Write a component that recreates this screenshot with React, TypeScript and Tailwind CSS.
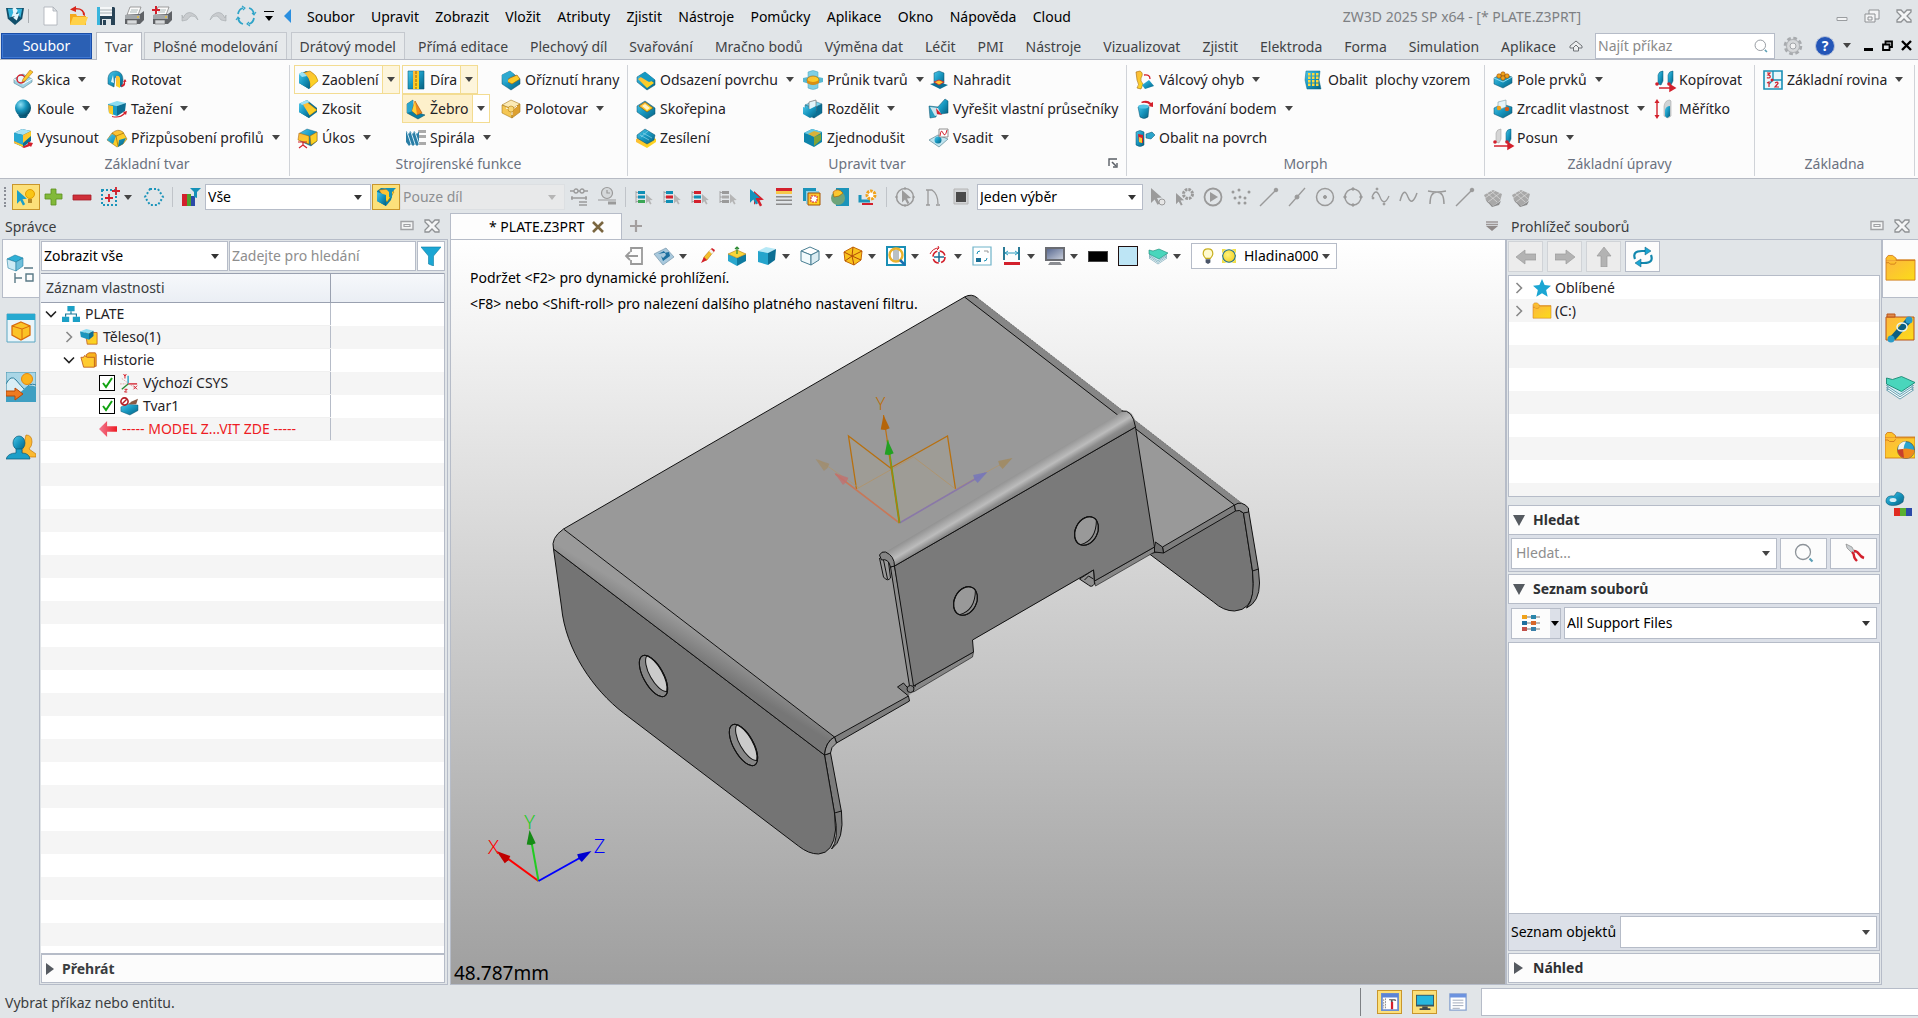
import React, { useState } from "react";
import type { ReactNode } from "react";

/* ---------- icon helpers ---------- */

const Caret = ({ cls = "text-[#444]" }: { cls?: string }) => (
  <svg viewBox="0 0 8 5" className={"h-[5px] w-2 shrink-0 " + cls} aria-hidden="true">
    <path d="M0 0h8L4 5z" fill="currentColor" />
  </svg>
);

const Cube = ({ t = "#7fd6ee", l = "url(#teal)", r = "#0b6f94", x = 0, y = 0, s = 1 }) => (
  <g transform={`translate(${x} ${y}) scale(${s})`} strokeLinejoin="round" strokeWidth=".4" stroke="#0a4f6b">
    <path d="M11 2l8 3-8 4-9-3z" fill={t} />
    <path d="M2 6l9 3v10l-9-4z" fill={l} />
    <path d="M19 5l-8 4v10l8-5z" fill={r} />
  </g>
);

const Folder = () => (
  <g stroke="#d07a1e" strokeWidth=".6" strokeLinejoin="round">
    <path d="M0 4h20v14H0z" fill="url(#gold)" />
    <path d="M0 4V3l1.500-2h3L7 3v1.500h13M0 6h2l1 1h3l1-1.500" fill="#fdc22a" />
  </g>
);

const Tower = ({ x = 0, g = false }) => (
  <path d={`M${x} 14V5q1-4 5-4v10l-2 4z`} fill={g ? "#d5d5d5" : "url(#teal)"} stroke={g ? "#999" : "#0a5a78"} strokeWidth=".5" />
);

const Cursor = ({ c = "#9b9b9b", x = 0, y = 0, s = 1 }) => (
  <path transform={`translate(${x} ${y}) scale(${s})`} d="M0 0l9 8-4 .4 2.400 4.600-2 1L3 9.500 0 12.500z" fill={c} />
);

const G = "#9a9a9a";
const red = "#d3202c";

const ListRows = ({ a, b, c = "#0f8fb5" }: { a: string; b: string; c?: string }) => (
  <g>
    <path d="M4 4h7v3H4z" fill={a} />
    <path d="M4 8.500h7v3H4z" fill={b} />
    <path d="M4 13h7v3H4z" fill={c} />
    <path d="M2 4v12M2 5.500h2M2 10h2M2 14.500h2" stroke="#999" strokeWidth=".8" fill="none" />
    <Cursor x={12} y={7} s={0.75} c="#b5b5b5" />
  </g>
);

const icons: Record<string, ReactNode> = {
  sketch: (
    <g>
      <path d="M1 9l9-5 9 5v3l-9 6-9-5z" fill="#9fd2e2" stroke="#5a8796" strokeWidth=".6" />
      <path d="M1 9l9 5 9-5" fill="none" stroke="#fff" />
      <circle cx="8" cy="9" r="4" fill="#e8f6fb" stroke={red} strokeWidth="1.500" />
      <path d="M17 0l3 2-8 9-3 1 1-3z" fill="url(#gold)" stroke="#a65a00" strokeWidth=".5" />
    </g>
  ),
  sphere: (
    <g>
      <path d="M5 16q5-2 10 0l-2 3H7z" fill="#0b5f80" />
      <ellipse cx="10" cy="9" rx="8" ry="8.500" fill="url(#ball)" />
    </g>
  ),
  extrude: (
    <g>
      <path d="M1 5l8-4 9 2v10l-8 6-9-4z" fill="#0b6f94" />
      <path d="M1 5l8-4 9 2-8 4z" fill="#a6e2f3" />
      <path d="M1 5l9 2v10l-9-4z" fill="#28a9d2" />
      <path d="M1 13l9 4v2l-9-4z" fill="url(#gold)" />
      <path d="M10 7l8-4v5l-8 7z" fill="url(#gold)" />
      <path d="M9 19l6-3v-2l5 1-2 4-1-1-6 2z" fill={red} />
    </g>
  ),
  revolve: (
    <g>
      <path d="M1 14V8q1-7 8-7 7 1 7 9l-1 7-5-2V8L8 7 7 17z" fill="url(#teal)" stroke="#0a4f6b" strokeWidth=".5" />
      <path d="M9 6q3-1 4 2v10l-4-2z" fill="url(#gold)" />
      <path d="M15 17q4-1 3-5l1.500-.5L18 9l-2 3 1 .2q0 2-3 3.300z" fill={red} />
      <path d="M4 12l2-7 1 8z" fill="#e4f5fb" />
    </g>
  ),
  sweep: (
    <g>
      <path d="M1 5l9-3 9 2-9 3z" fill="#8adcf1" />
      <path d="M1 5l9 2v10l-8-3z" fill="#1b9cc5" />
      <path d="M10 7l9-3-1 8-8 5z" fill="#0b6f94" />
      <path d="M1 6l5 1v9l-4-2z" fill="url(#gold)" />
      <path d="M5 17q7 2 12-3l-1-1 4-1-1 4-1-1q-5 5-13 3z" fill={red} />
    </g>
  ),
  loft: (
    <g>
      <path d="M0 12l5-7q6-5 11-1l4 7-4 5-6 3z" fill="url(#gold)" stroke="#8a5a00" strokeWidth=".5" />
      <path d="M0 12l5-6 4 2-3 8zM12 12l7-2-3 6-5 3z" fill="url(#teal)" />
      <path d="M5 5l4 3 8-3M9 8l2 10" stroke="#8a5a00" strokeWidth=".6" fill="none" />
    </g>
  ),
  fillet: (
    <g>
      <path d="M1 5l7-4q9 1 11 9l-8 9-10-6z" fill="#0b6f94" />
      <path d="M5 3l7-2q7 4 8 10l-8 7Q13 9 5 3z" fill="url(#gold)" stroke="#a86a00" strokeWidth=".5" />
      <path d="M1 4l3-2q9 5 8 15l-1 2-10-6z" fill="url(#teal)" />
      <path d="M1 4l3-2q3 1 5 4L4 7z" fill="#9be1f4" />
    </g>
  ),
  chamfer: (
    <g>
      <path d="M1 5l8-4 10 8v4l-8 6-10-6z" fill="#0b6f94" />
      <path d="M9 3l10 8-8 6L3 6z" fill="url(#gold)" stroke="#a86a00" strokeWidth=".5" />
      <path d="M1 5l3-1 8 13-1 2-10-6z" fill="url(#teal)" />
      <path d="M2 4l7-3 3 2-8 3z" fill="#9be1f4" />
    </g>
  ),
  draft: (
    <g>
      <path d="M2 5l7-4 10 3v9l-6 5-11-5z" fill="url(#teal)" stroke="#0a4f6b" strokeWidth=".4" />
      <path d="M1 5l10 3v8L0 12zM12 8l7-4v9l-6 4z" fill="url(#gold)" stroke="#a05a00" strokeWidth=".5" />
      <path d="M5 14v3l-4 3M5 17l4 3M0 14h9" stroke={red} fill="none" strokeWidth="1.200" />
    </g>
  ),
  hole: (
    <g>
      <path d="M2 1h16v18H2z" fill="url(#teal)" stroke="#0a5a78" strokeWidth=".6" />
      <path d="M7 1h6v18H7z" fill="url(#gold)" />
      <path d="M10 1v18" stroke="#9c6200" strokeDasharray="3 1" />
    </g>
  ),
  rib: (
    <g>
      <path d="M1 5l6-4v11l12 4-7 4-11-6z" fill="#0b7ea5" stroke="#08485f" strokeWidth=".5" />
      <path d="M1 5l6-4v11l-6 2z" fill="#2aa5cc" />
      <path d="M9 2l7 12-5 2-5-4z" fill="#f08a1c" stroke="#a84a00" strokeWidth=".6" />
      <path d="M9 2l2 14-5-4z" fill="#ffd23a" />
    </g>
  ),
  thread: (
    <g>
      <path d="M12 2h8v3h-7zM12 7h8v3h-7zM13 14h7v3h-7z" fill="#aaa" />
      <path d="M0 3l3 3 1-3 3 3 1-3 3 3 2-3v13l-2 2-2-2-2 2-2-2-2 2-3-4z" fill="#2a7ea6" />
      <path d="M1 4l4 12M5 4l4 12M9 4l4 12" stroke="#cfe9f4" />
    </g>
  ),
  trim: (
    <g>
      <path d="M1 5l8-4 10 8v5l-9 6-9-6z" fill="url(#teal)" stroke="#0a4f6b" strokeWidth=".5" />
      <path d="M9 8l7-3 3 4-8 5-6-3z" fill="url(#gold)" stroke="#a05a00" strokeWidth=".6" />
      <path d="M1 5l8-4 4 3-6 4v5l-5-2z" fill="#2ea9cf" />
    </g>
  ),
  stock: (
    <g>
      <g stroke="#a87a1c" strokeWidth=".6">
        <path d="M1 6l9-5 9 4-8 5z" fill="#fbeab5" />
        <path d="M1 6l10 4v9l-10-5z" fill="#f4c653" />
        <path d="M19 5l-8 5v9l8-6z" fill="#dda030" />
      </g>
      <path d="M5 9l6 2 5-4M11 11v5" stroke="#fff" fill="none" />
      <circle cx="10" cy="10" r="3" fill="#f8d777" stroke="#b07c14" strokeWidth=".6" />
    </g>
  ),
  offset: (
    <g>
      <path d="M1 7l8-5 10 8v5l-8 5L1 12z" fill="url(#teal)" stroke="#0a4f6b" strokeWidth=".5" />
      <path d="M2 9l6-4 10 8-7 5z" fill="url(#gold)" />
      <path d="M3 6l6-4 10 8-6 2z" fill="#1699c2" />
    </g>
  ),
  shell: (
    <g>
      <path d="M1 7l8-5 10 7v6l-8 5L1 13z" fill="url(#teal)" stroke="#0a4f6b" strokeWidth=".5" />
      <path d="M3 7l6-4 8 6-6 4z" fill="url(#gold)" stroke="#8c4b00" strokeWidth=".6" />
      <path d="M6 7l3-2 5 4-3 2z" fill="#fff3c8" />
    </g>
  ),
  thicken: (
    <g>
      <path d="M0 11l9-5 11 5v3l-9 6-11-6z" fill="url(#gold)" />
      <path d="M1 7l8-6 10 6-1 5-7 4-10-6z" fill="url(#teal)" stroke="#0a4f6b" strokeWidth=".5" />
      <path d="M4 7l9 5M7 5l9 5M12 3L5 9" stroke="#9adcf0" strokeWidth=".6" />
    </g>
  ),
  intersect: (
    <g>
      <path d="M5 2q5-3 10 0v16q-5 3-10 0z" fill="#7fcfe4" stroke="#4aa4bd" strokeWidth=".5" />
      <path d="M0 8l10-2 10 2v4l-10 3-10-3z" fill="#58b8d2" />
      <ellipse cx="10" cy="10" rx="6" ry="4" fill="url(#gold)" stroke="#9c6200" strokeWidth=".6" />
      <path d="M4 10q6 4 12 0v3q-6 4-12 0z" fill="#d98f14" />
    </g>
  ),
  split: (
    <g>
      <Cube />
      <path d="M6 3l7-2v11l-7 4z" fill="#e3f4f9" stroke="#777" strokeWidth=".7" />
      <path d="M0 8l7 2v9l-7-4zM7 10l6-3v9l-6 3z" fill="url(#teal)" />
    </g>
  ),
  simplify: (
    <g>
      <path d="M1 5l8-4 10 3v10l-8 5-10-5z" fill="#0e84aa" />
      <path d="M1 5l8-4 10 3-8 4z" fill="#67c9e4" />
      <path d="M11 9l7-3v6l-7 6z" fill="#83a436" />
      <path d="M5 6l6-3 7 2-7 4z" fill="#d9b23a" />
    </g>
  ),
  replace: (
    <g>
      <path d="M5 3l5-2 5 2v10l-5 3-5-3z" fill="url(#teal)" stroke="#0a4f6b" strokeWidth=".5" />
      <path d="M1 14l9-2 9 3-8 4z" fill="#0b6f94" />
      <path d="M5 12l5-2 5 2-5 3z" fill="url(#gold)" stroke={red} strokeWidth=".8" />
    </g>
  ),
  solve: (
    <g>
      <path d="M0 7l9 1-2 10-6 1z" fill="#2a9dc0" stroke="#0a4f6b" strokeWidth=".5" />
      <path d="M8 9l8-9 3 2v12l-7 1z" fill="url(#teal)" stroke="#0a4f6b" strokeWidth=".5" />
      <path d="M1 8l8 1 3 6-6 2z" fill="#cfe6ee" />
      <path d="M7 9l6 7-5-1z" fill={red} />
    </g>
  ),
  embed: (
    <g>
      <path d="M0 12l9-5 10 4-9 8z" fill="#bfe4ef" stroke="#5d8794" strokeWidth=".7" />
      <circle cx="9" cy="12" r="3.500" fill="url(#teal)" />
      <path d="M10 1h9v8h-9z" fill="#fff" stroke="#777" strokeWidth=".8" />
      <path d="M11 8q1-8 3-3t4-3" fill="none" stroke={red} />
    </g>
  ),
  cylbend: (
    <g>
      <path d="M1 2l4-1q4 2 1 7-1 3 2 6l-2 5-4-1q3-3 0-8z" fill="url(#gold)" stroke="#a66b00" strokeWidth=".6" />
      <path d="M7 15l7-5 5 6-9 3z" fill="url(#teal)" />
      <path d="M9 5q6-1 6 4" fill="none" stroke={red} strokeWidth="1.300" />
    </g>
  ),
  morph: (
    <g>
      <path d="M3 8q6-3 11 0l-1 10q-4 3-8 0z" fill="url(#teal)" stroke="#0a4f6b" strokeWidth=".5" />
      <ellipse cx="8.500" cy="7.500" rx="5.500" ry="2" fill="#57c4e4" />
      <path d="M6 3q6-3 10 1l2-1v5l-5-1 2-1q-3-3-8-2z" fill={red} />
    </g>
  ),
  wrap: (
    <g>
      <path d="M1 4q4-3 8 0v13q-4 3-8 0z" fill="url(#teal)" stroke="#0a4f6b" strokeWidth=".5" />
      <path d="M3 6l5 1v8l-4-1z" fill={red} />
      <path d="M4 9l3 1v5l-3-1z" fill="url(#gold)" />
      <path d="M11 6l6-2 3 3-4 4-5-1z" fill="#2aa4ca" stroke="#0a4f6b" strokeWidth=".5" />
    </g>
  ),
  wrappat: (
    <g>
      <path d="M2 1h14l-1 9 2 9H3L1 10z" fill="url(#teal)" stroke="#0a6b8c" strokeWidth=".5" />
      {[3, 6.500, 10, 13.500].map((y) => (
        <path key={y} d={`M4 ${y}h2.500v2.500H4zM8 ${y}h2.500v2.500H8zM12 ${y}h2.500v2.500H12z`} fill="#ffd83a" />
      ))}
    </g>
  ),
  pattern: (
    <g>
      <path d="M1 8l8-4 10 3v6l-9 5-9-4z" fill="url(#teal)" stroke="#0a4f6b" strokeWidth=".5" />
      <path d="M1 8l9 4 9-5" stroke="#8fd9ee" fill="none" />
      {[[6, 6], [10, 4], [10, 8], [14, 6]].map(([x, y]) => (
        <circle key={x + "-" + y} cx={x} cy={y} r="2.200" fill="#f0a21b" stroke="#9a4a00" strokeWidth=".6" />
      ))}
    </g>
  ),
  mirror: (
    <g>
      <path d="M1 9l8-4 10 3v6l-9 5-9-4z" fill="url(#teal)" stroke="#0a4f6b" strokeWidth=".5" />
      <path d="M5 3l8-2v7l-8 3z" fill="#e6f4f8" stroke="#7c9aa3" strokeWidth=".6" />
      <circle cx="6" cy="9" r="2.200" fill="#f0a21b" />
      <circle cx="14" cy="10" r="2.200" fill="#d05a1b" />
    </g>
  ),
  move: (
    <g>
      <Tower x={3} g />
      <Tower x={13} />
      <path d="M1 18h15M15 15l5 3-5 3z" stroke={red} strokeWidth="1.500" fill={red} />
      <circle cx="2" cy="14" r="1.800" fill={red} />
      <circle cx="14" cy="14" r="1.800" fill={red} />
    </g>
  ),
  copy: (
    <g>
      <Tower x={3} />
      <Tower x={13} />
      <path d="M4 18h12M15 15l5 3-5 3z" stroke={red} strokeWidth="1.500" fill={red} />
      <circle cx="2" cy="14" r="1.800" fill={red} />
      <circle cx="14" cy="14" r="1.800" fill={red} />
    </g>
  ),
  scale: (
    <g>
      <path d="M9 17V7q1-6 6-6l1 1v15l-3 2z" fill="#cfd4d6" stroke="#999" strokeWidth=".5" />
      <path d="M10 17v-6q1-4 5-4v10l-3 2z" fill="url(#teal)" />
      <path d="M2 3v14" stroke={red} strokeWidth="1.400" />
      <path d="M2 0l2.500 4h-5zM2 20l2.500-4h-5z" fill={red} />
    </g>
  ),
  datum: (
    <g>
      <path d="M1 1h18v18H1z" fill="#eaf7fb" stroke="#1a8fb5" strokeWidth="1.600" />
      <path d="M10 1v9h9M10 10L6 14" stroke="#1a8fb5" fill="none" strokeWidth="1.400" />
      <path d="M4 3h3L5 5q3 0 2 2.500-2 1-3 0M4 13l2-1v5M12 13q3-2 3 .5l-3 3.500h4" stroke={red} fill="none" strokeWidth="1.200" />
      <circle cx="9" cy="10" r="1.500" fill={red} />
    </g>
  ),
  newdoc: <path d="M4 1h9l4 4v14H4zM13 1v4h4" fill="#fff" stroke="#a8adb5" strokeWidth=".8" />,
  open: (
    <g>
      <path d="M2 8h6l1 2h9v9H2z" fill="#f5a91d" />
      <path d="M5 11h15l-3 8H2z" fill="#ffd24a" />
      <path d="M15 9q0-6-7-5.500V6L2 3.500 8 0v2q9 0 9 8z" fill="#d8261c" />
    </g>
  ),
  save: (
    <g>
      <path d="M1 1h17l1 1v17H1z" fill="#284356" />
      <path d="M4 1h12v9H4z" fill="#f5f7f8" />
      <path d="M4 4h12M4 7h12" stroke="#a8b0b5" />
      <path d="M1 1h3v18H1z" fill="#38b5dd" />
      <path d="M6 13h9v6H6z" fill="#dfe5e8" />
      <path d="M7 14h3v5H7z" fill="#284356" />
    </g>
  ),
  printer: (
    <g>
      <path d="M6 1h11l-3 8H3z" fill="#fafafa" stroke="#888" strokeWidth=".8" />
      <path d="M7 4h7M6 6h7" stroke="#9aa" strokeWidth=".8" />
      <path d="M1 9l15-1 4-3v9l-4 4H1z" fill="#5f6266" />
      <path d="M1 9h15v4H1z" fill="#a3a7aa" />
      <path d="M3 14h10v4H3z" fill="#d5d8da" stroke="#666" strokeWidth=".6" />
      <circle cx="14" cy="11" r="1" fill="#e4bf3a" />
    </g>
  ),
  plusred: <path d="M4 0v8M0 4h8" stroke="#d3202c" strokeWidth="2" />,
  undo: <path d="M3 12q3-7 9-5 5 2 6 7-3-5-7-4-2 1-4 4l-5 1V9z" fill="#c9cccf" stroke="#a5a9ac" strokeWidth=".6" />,
  redo: <path d="M17 12q-3-7-9-5-5 2-6 7 3-5 7-4 2 1 4 4l5 1V9z" fill="#c9cccf" stroke="#a5a9ac" strokeWidth=".6" />,
  cycle: (
    <g fill="none" stroke="#2fa4c8" strokeWidth="1.800">
      <path d="M2 8q1-5 5-6M13 2q4 1 5 6M18 12q-1 5-5 6M7 18q-4-1-5-6" />
      <path d="M6 0l3 2-2 2M20 6l-2 3-2-2M14 20l-3-2 2-2M0 14l2-3 2 2" strokeWidth="1.100" />
    </g>
  ),
  logo: (
    <g>
      <path d="M0 1h20l-2 12-8 7-8-7z" fill="#12506b" />
      <path d="M2 2h5l2 7-5 3zM11 2h7l-2 10-3-5z" fill="#35b6dd" />
      <path d="M7 2l3-2 3 4-2 4 4-1-3 8-4-3 2-2-4 1 2-5z" fill="#e6f7fd" />
    </g>
  ),
  lamp: (
    <g>
      <Cursor c="#1b9fc9" x={1} y={3} s={1.100} />
      <circle cx="14" cy="7" r="4.500" fill="#f9c515" stroke="#e39c00" />
      <path d="M12 12h4v4h-4z" fill="#b58b2a" />
    </g>
  ),
  plus: <path d="M7 2h5v5h6v5h-6v6H7v-6H1V7h6z" fill="#82b93a" stroke="#5c8f20" strokeWidth=".8" />,
  minus: <path d="M1 8h18v5H1z" fill="#cf2f3a" stroke="#a51c26" strokeWidth=".8" />,
  marquee: (
    <g fill="none">
      <path d="M2 3h14v15H2z" stroke="#1b94ba" strokeWidth="2" strokeDasharray="2 2" />
      <path d="M9 7v8M5 11h8M16 0v8M12 4h8" stroke={red} strokeWidth="1.800" />
    </g>
  ),
  lasso: <path d="M6 2h8l5 8-5 8H6l-5-8z" fill="none" stroke="#1b94ba" strokeWidth="2" strokeDasharray="2 2" />,
  filterbars: (
    <g>
      <path d="M1 7h5v12H1z" fill="#d3202c" />
      <path d="M6 7h4v12H6z" fill="#4aa32e" />
      <path d="M10 9h4v10h-4z" fill="#2c4aa8" />
      <path d="M9 1h11l-4 4v6l-3-1V5z" fill="#1591b8" />
    </g>
  ),
  partfilter: (
    <g>
      <path d="M1 4l4-3 13 1-3 11-5 6-9-5z" fill="#0b7ea5" />
      <path d="M3 3l10-1 5 3-7 10z" fill="url(#gold)" stroke="#a86a00" strokeWidth=".5" />
      <path d="M1 5l9 3v11l-9-5z" fill="url(#teal)" />
      <path d="M9 1h11l-4 4v6l-3-1V5z" fill="#1591b8" />
    </g>
  ),
  chainref: (
    <g stroke={G} fill="none" strokeWidth="1.300">
      <path d="M1 4h4M9 4h2M15 4h4M2 11h16M3 9v4M17 9v4" />
      <circle cx="7" cy="4" r="2" />
      <circle cx="13" cy="4" r="2" />
      <path d="M10 15h8M10 18h8" />
    </g>
  ),
  clockref: (
    <g stroke={G} fill="none" strokeWidth="1.200">
      <circle cx="10" cy="6" r="5.500" fill="#d5d8da" />
      <path d="M10 3v3h3M1 13h18" />
      <path d="M11 16h8" strokeWidth="3" />
    </g>
  ),
  l1: <ListRows a="#0f8fb5" b="#0f8fb5" c="#3aa655" />,
  l2: <ListRows a="#0f8fb5" b="#d3202c" />,
  l3: <ListRows a="#d3202c" b="#0f8fb5" c="#d3202c" />,
  l4: <ListRows a="#9a9a9a" b="#aaa" c="#9a9a9a" />,
  arrows: (
    <g>
      <Cursor c={red} x={8} y={4} s={1.100} />
      <Cursor c="#1593bb" x={4} y={2} s={1.100} />
    </g>
  ),
  lines: (
    <g>
      <path d="M2 1h16v3H2z" fill={red} />
      <path d="M2 4h16v3H2z" fill="#f6c84a" />
      <path d="M2 9h16v1.500H2zM2 12.500h16V14H2zM2 16.500h16V18H2z" fill="#8b8b8b" />
    </g>
  ),
  boxes: (
    <g>
      <path d="M1 1h13v13H1z" fill="#1b94ba" />
      <path d="M4 4h13v13H4z" fill="#8bd1e5" />
      <path d="M6 6h12v12H6z" fill="url(#gold)" stroke="#a85500" />
      <path d="M9 9h6v6H9z" fill="#fff" stroke={red} strokeDasharray="2 1" />
    </g>
  ),
  ballbox: (
    <g>
      <path d="M6 1h13v18H6z" fill="#1b94ba" />
      <circle cx="8" cy="11" r="7" fill="#6fa47a" />
      <path d="M3 5q5-5 10 1l-4 3-5 1z" fill="url(#gold)" stroke="#a85500" strokeWidth=".6" />
    </g>
  ),
  geared: (
    <g>
      <path d="M2 8v6h10" stroke="#1b94ba" strokeWidth="3" fill="none" />
      <path d="M4 17h11" stroke={red} strokeWidth="2" />
      <circle cx="13" cy="8" r="4" fill="#fff" stroke="#f0a21b" strokeWidth="3" strokeDasharray="2.500 1" />
    </g>
  ),
  gcursor: (
    <g>
      <circle cx="10" cy="10" r="8.500" fill="none" stroke={G} strokeWidth="1.500" />
      <Cursor x={7} y={3} />
      <path d="M10 0v3M10 17v3M0 10h3M17 10h3" stroke={G} />
    </g>
  ),
  gbracket: <path d="M5 18V3h4q6 4 6 14M3 3h4M3 18h4M13 18h4" stroke={G} strokeWidth="1.300" fill="none" />,
  gsquare: (
    <g>
      <path d="M3 2h14v15H3z" fill="#d2d4d6" stroke="#b5b5b5" />
      <path d="M5 5h10v10H5z" fill="#4a4a4a" />
    </g>
  ),
  gpick: (
    <g>
      <Cursor x={4} y={1} s={1.200} />
      <circle cx="15" cy="15" r="3" fill="#e6e6e6" stroke={G} />
    </g>
  ),
  ggear: (
    <g>
      <circle cx="13" cy="7" r="4.500" fill="none" stroke={G} strokeWidth="3" strokeDasharray="2.500 1" />
      <Cursor x={1} y={6} s={0.900} />
    </g>
  ),
  gplay: (
    <g>
      <circle cx="10" cy="10" r="8.500" fill="none" stroke={G} strokeWidth="1.800" />
      <path d="M7 5l8 5-8 5z" fill={G} />
    </g>
  ),
  gdots: (
    <g fill={G}>
      {[[2, 5], [8, 3], [9, 10], [18, 5], [4, 11], [14, 11], [14, 16], [8, 16]].map(([x, y]) => (
        <circle key={x + "/" + y} cx={x} cy={y} r="1.500" />
      ))}
    </g>
  ),
  gline: (
    <g stroke={G} fill={G}>
      <path d="M1 19L17 3" strokeWidth="1.500" />
      <circle cx="17" cy="3" r="1.800" />
    </g>
  ),
  gmid: (
    <g stroke={G} fill={G}>
      <path d="M2 19L18 1" strokeWidth="1.300" />
      <circle cx="10" cy="10" r="2" />
    </g>
  ),
  gcenter: (
    <g stroke={G} fill={G}>
      <circle cx="10" cy="10" r="8.500" fill="none" strokeWidth="1.500" />
      <circle cx="10" cy="10" r="1.500" />
    </g>
  ),
  gquad: (
    <g stroke={G} fill={G}>
      <circle cx="10" cy="10" r="8" fill="none" strokeWidth="1.500" />
      <circle cx="10" cy="2" r="1.200" />
      <circle cx="18" cy="10" r="1.200" />
      <circle cx="10" cy="18" r="1.200" />
      <circle cx="2" cy="10" r="1.200" />
    </g>
  ),
  gwavep: (
    <g stroke={G} fill={G}>
      <path d="M1 10q4-10 8 0t9-1" fill="none" strokeWidth="1.300" />
      <circle cx="6" cy="2" r="1" />
      <circle cx="13" cy="17" r="1" />
      <circle cx="2" cy="11" r="1" />
    </g>
  ),
  gwave: <path d="M1 14q4-15 8-4 4 10 9-4" fill="none" stroke={G} strokeWidth="1.500" />,
  garch: <path d="M1 4q9 2 18 0M3 17q0-12 7-12t7 12" fill="none" stroke={G} strokeWidth="1.500" />,
  gmesh: (
    <g>
      <path d="M1 8l9-5 9 4-2 7-7 5-6-4z" fill="#a8a8a8" />
      <path d="M4 6l10 9M8 4l9 8M2 11l10-7M5 15l12-9" stroke="#ddd" strokeWidth=".7" />
      <path d="M2 12l8 7 8-5-2 4-7 2z" fill="#8a8a8a" />
    </g>
  ),
  vexit: <path d="M7 6V2h11v16H7v-4M14 10H2m4-4l-4 4 4 4" fill="none" stroke="#9a9a9a" strokeWidth="1.800" />,
  vplane: (
    <g>
      <path d="M0 8L12 2l8 9-11 8z" fill="#a9c9dd" stroke="#698aa0" strokeWidth=".6" />
      <path d="M4 8l6-3 2 4-3 3-2-2 2 5 7-5-1-4" fill="#1d6f9f" />
    </g>
  ),
  vpencil: (
    <g>
      <path d="M6 15l1-4 7-8 3 2-7 9z" fill="#f4bf2a" stroke="#b87a1a" strokeWidth=".6" />
      <path d="M12 5l2-2 3 2-2 3z" fill="#f1f1f1" />
      <path d="M14 3l1-1 3 2-1 2z" fill={red} />
      <path d="M4 17l3-6 3 3z" fill={red} />
    </g>
  ),
  vblock: (
    <g>
      <path d="M1 8l9 4v8l-9-5z" fill="#2aa7cd" />
      <path d="M19 8l-9 4v8l9-5z" fill="#0e7ba0" />
      <path d="M1 8l9-4 9 4-9 4z" fill="#f8d53a" stroke="#a66b00" strokeWidth=".5" />
      <path d="M10 8V1M8 3l2-2 2 2" stroke="#2c8a34" strokeWidth="1.200" fill="none" />
    </g>
  ),
  vshade: (
    <g>
      <path d="M1 5l8-4 10 2-8 4z" fill="#b5e8f6" />
      <path d="M1 5l10 2v12L1 16z" fill="#25a4cc" />
      <path d="M19 3l-8 4v12l7-5z" fill="#0c6f94" />
    </g>
  ),
  vwire: (
    <g stroke="#4a7f93" strokeWidth="1" strokeLinejoin="round">
      <path d="M1 5l9-4 9 4-8 4z" fill="#fff" />
      <path d="M1 5l10 4v10L1 15z" fill="#f2fafc" />
      <path d="M19 5l-8 4v10l8-5z" fill="#dcecf2" />
    </g>
  ),
  vpoly: (
    <g>
      <path d="M10 1l9 4-1 9-7 5-9-4-1-9z" fill="#f9c21c" stroke="#c46708" />
      <path d="M10 1L9 10l10-5M9 10l9 4M9 10l2 9M9 10l-7 5M9 10L1 6" stroke="#b04a08" fill="none" />
    </g>
  ),
  vzoom: (
    <g>
      <path d="M1 1h18v18H1z" fill="#fff" stroke="#1a8fb5" strokeWidth="2" />
      <path d="M7 4h6v11H7z" fill="#b9c0c4" />
      <circle cx="10" cy="9" r="6.500" fill="none" stroke="#eab22c" strokeWidth="2.400" />
      <path d="M14 14l5 5" stroke="#1a6fb0" strokeWidth="2.500" />
    </g>
  ),
  vtarget: (
    <g fill="none">
      <circle cx="10" cy="11" r="6" stroke={red} strokeWidth="1.600" strokeDasharray="7 2.400" />
      <path d="M10 6v10M5 11h10" stroke="#1a6f95" strokeWidth="1.500" />
      <path d="M1 8q3-6 9-6l-1-2M10 2L8 4" stroke={red} />
    </g>
  ),
  vfit: (
    <g>
      <path d="M1 1h18v18H1z" fill="#fff" stroke="#6fb3c9" strokeWidth="1.200" />
      <path d="M5 8q0-3 3-3M12 15q3 0 3-3" stroke="#1a8fb5" fill="none" />
      <path d="M4 12h5v4H4z" fill="#1a6f95" />
      <path d="M12 5h4v2" stroke="#999" fill="none" />
    </g>
  ),
  vdim: (
    <g>
      <path d="M2 1v13M17 1v13" stroke="#2a7a96" strokeWidth="2" />
      <path d="M3 7h13M6 5L3 7l3 2M13 5l3 2-3 2" stroke="#2a9cc0" fill="none" />
      <path d="M2 16h16v3H2z" fill={red} />
    </g>
  ),
  vmon: (
    <g>
      <path d="M0 1h20v14H0z" fill="#6a6c72" />
      <path d="M2 3h16v10H2z" fill="url(#screen)" />
      <path d="M5 16h10l2 3H3z" fill="#8b8d92" />
    </g>
  ),
  vlayers: (
    <g stroke="#5a96a8" strokeWidth=".6">
      <path d="M1 12l9-4 9 4-9 6z" fill="#fff" />
      <path d="M1 10.500l9-4 9 4-9 6z" fill="#e2f4f8" />
      <path d="M1 9l9-4 9 4-9 6z" fill="#d0edf4" />
      <path d="M1 4l4 1 6-2 9 4-9 6-10-5z" fill="#49d6bc" stroke="#1a8874" />
    </g>
  ),
  bulb: (
    <g>
      <path d="M10 1q6 0 6 6 0 3-3 6H7Q4 10 4 7q0-6 6-6z" fill="#fffbd0" stroke="#c8b020" strokeWidth="1.500" />
      <path d="M7 14h6v4l-3 2-3-2z" fill="#4a5568" />
    </g>
  ),
  sun: (
    <g>
      <path d="M0 0h6L0 6zM20 0h-6l6 6zM0 20v-6l6 6zM20 20h-6l6-6z" fill="#f1df4a" />
      <circle cx="10" cy="10" r="9" fill="url(#sunny)" stroke="#1f6f86" strokeWidth="1.600" />
    </g>
  ),
  tree: (
    <g>
      <path d="M6 1h8v6H6zM0 13h8v6H0zM12 13h8v6h-8z" fill="#1ba0c6" />
      <path d="M10 7v3M4 13v-3h12v3" stroke="#1a7a9c" fill="none" strokeWidth="1.300" />
    </g>
  ),
  body: (
    <g>
      <path d="M6 5h13v13H8z" fill="url(#gold)" stroke="#b9541a" strokeWidth=".8" />
      <path d="M0 4l7-3 8 2-5 3z" fill="#8edcf2" />
      <path d="M0 4l10 2v7l-9-3z" fill="#1b95bd" />
      <path d="M15 3l-5 3v7l5-4z" fill="#0b6f94" />
    </g>
  ),
  hist: (
    <g stroke="#b9541a" strokeWidth=".9" strokeLinejoin="round">
      <path d="M7 4l3-2h7l1 2v13H7z" fill="#f9b41c" />
      <path d="M1 7h3l1-2 3 2h8v11H4z" fill="#ffcb30" />
    </g>
  ),
  csys: (
    <g fill="none" strokeWidth="1.500">
      <path d="M9 11V2" stroke="#1ba0c6" />
      <path d="M9 11h10" stroke={red} />
      <path d="M9 11l-7 6" stroke="#2c8a34" />
      <path d="M2 5l15 11M0 11h7" stroke="#e28b90" strokeWidth=".8" strokeDasharray="2 1" />
      <path d="M4 0l1.500 2.500L7 0M5.500 2.500V5M15 13l4 4m0-4l-4 4M5 17h3l-3 3h3" stroke={red} strokeWidth="1.100" />
    </g>
  ),
  shape1: (
    <g>
      <path d="M1 11l7-3 12 1v6l-9 5-10-4z" fill="url(#teal)" stroke="#0a4f6b" strokeWidth=".5" />
      <path d="M9 8l4-3 7-3-2 6z" fill="#8a5a44" />
      <circle cx="5" cy="5" r="4" fill="none" stroke="#b51f26" strokeWidth="1.800" />
      <path d="M2.500 7.500l5-5" stroke="#b51f26" strokeWidth="1.500" />
    </g>
  ),
  redarrow: <path d="M0 10l9-9v6h11v6H9v6z" fill="url(#redg)" />,
  star: <path d="M10 0l2.900 6.800 7.100.7-5.400 4.800 1.700 7.300L10 15.700l-6.300 3.900 1.700-7.300L0 7.500l7.100-.7z" fill="#1ba6d3" />,
  folder: <Folder />,
  swap: (
    <g fill="none" stroke="#1287ad" strokeWidth="2.200">
      <path d="M2 12Q-1 4 9 4h5M18 8q3 8-7 8H7" />
      <path d="M12 0l6 4-6 4zM8 12l-6 4 6 4z" fill="#1ba6d3" stroke="#0a5a78" strokeWidth=".5" />
    </g>
  ),
  search: (
    <g fill="none">
      <circle cx="9" cy="9" r="7.500" stroke="#8d9399" strokeWidth="1.300" />
      <path d="M15.500 15.500l3 3" stroke="#5c9fb5" strokeWidth="2.200" />
    </g>
  ),
  pliers: (
    <g fill="none">
      <path d="M2 1l6 3 3 6-4-1-4-4z" fill="#c9ced1" stroke="#888" strokeWidth=".7" />
      <path d="M8 9q2 2 2 4t3 5M10 8q3 0 5 3t5 4" stroke={red} strokeWidth="2.400" />
    </g>
  ),
  grid: (
    <g>
      {[2, 8, 14].map((y, i) => (
        <g key={y}>
          <path d={`M1 ${y}h5v4H1z`} fill={["#f0a21b", "#1d6f9f", "#c0504a"][i]} />
          <path d={`M6 ${y + 2}h4M15 ${y + 2}h4`} stroke="#777" />
          <path d={`M10 ${y}h5v4h-5z`} fill={["#2b86ab", "#d9662a", "#3a7fa8"][i]} />
        </g>
      ))}
    </g>
  ),
  tb1: (
    <g>
      <path d="M1 1h18v18H1z" fill="#fff" stroke="#6d8fcf" strokeWidth="2" />
      <path d="M1 1h18v4H1z" fill="#5b84d6" />
      <path d="M5 6v12M3 7v10" stroke="#888" strokeDasharray="2 1" />
      <path d="M9 7h7l1 2-4-1v2h-2V8H9z" fill="#555" />
      <path d="M11 10h2.500v8H11z" fill={red} />
    </g>
  ),
  tb2: (
    <g>
      <path d="M0 2h20v13H0z" fill="#3a5560" />
      <path d="M1 3h18v10H1z" fill="#27b7dd" />
      <path d="M7 15h6v2h3v2H4v-2h3z" fill="#40484c" />
    </g>
  ),
  tb3: (
    <g>
      <path d="M1 1h18v18H1z" fill="#fff" stroke="#88a3cf" strokeWidth="1.500" />
      <path d="M1 1h18v4H1z" fill="#6d93df" />
      <path d="M4 8h12M4 11h12M4 14h12M4 17h8" stroke="#9aa4b5" />
    </g>
  ),
  gear: (
    <g>
      <circle cx="10" cy="10" r="7.500" fill="#d2d4d6" stroke="#a8abae" strokeWidth="3.500" strokeDasharray="3.500 2.400" />
      <circle cx="10" cy="10" r="6.500" fill="#d6d8da" stroke="#b0b3b6" />
      <circle cx="10" cy="10" r="3" fill="#f3f3f3" stroke="#a3a6a9" />
    </g>
  ),
};

const Icon = ({ n, cls = "size-5" }: { n: string; cls?: string }) => (
  <svg viewBox="0 0 20 20" className={"shrink-0 overflow-visible " + cls} aria-hidden="true">
    {icons[n]}
  </svg>
);

const FloatIcon = () => (
  <svg viewBox="0 0 14 12" className="h-3 w-3.5" aria-hidden="true">
    <path d="M1 1.500h12v8H1z" fill="#f3f4f5" stroke="#a0a2a5" strokeWidth="1.400" />
    <path d="M4 4.500h6v2H4z" fill="none" stroke="#a0a2a5" strokeWidth="1.200" />
  </svg>
);

const CloseIcon = () => (
  <svg viewBox="0 0 16 14" className="h-3.5 w-4" aria-hidden="true">
    <path d="M1 2V1h4l3 3 3-3h4v2l-4 4 4 4v2h-4l-3-3-3 3H1v-2l4-4-4-4z" fill="#f4f5f6" stroke="#8e9194" strokeWidth="1.300" />
  </svg>
);

const Defs = () => (
  <svg className="absolute size-0" aria-hidden="true">
    <defs>
      <linearGradient id="teal" x1="0" y1="0" x2="1" y2="1">
        <stop offset="0" stopColor="#4cc6e8" />
        <stop offset=".5" stopColor="#1796bf" />
        <stop offset="1" stopColor="#07607f" />
      </linearGradient>
      <linearGradient id="gold" x1="0" y1="0" x2="1" y2="1">
        <stop offset="0" stopColor="#fdb640" />
        <stop offset="1" stopColor="#fbdc18" />
      </linearGradient>
      <linearGradient id="screen" x1="0" y1="0" x2="1" y2="1">
        <stop offset="0" stopColor="#5b6b92" />
        <stop offset="1" stopColor="#c5cbd8" />
      </linearGradient>
      <linearGradient id="redg" x1="0" y1="0" x2="1" y2="0">
        <stop offset="0" stopColor="#f27a92" />
        <stop offset="1" stopColor="#ee1c24" />
      </linearGradient>
      <radialGradient id="ball" cx=".35" cy=".3" r=".7">
        <stop offset="0" stopColor="#8fe0f5" />
        <stop offset=".5" stopColor="#1795bd" />
        <stop offset="1" stopColor="#064f6c" />
      </radialGradient>
      <radialGradient id="sunny" cx=".4" cy=".4" r=".7">
        <stop offset="0" stopColor="#fff27a" />
        <stop offset="1" stopColor="#f3cf1a" />
      </radialGradient>
    </defs>
  </svg>
);

/* ---------- title bar ---------- */

const menus = ["Soubor", "Upravit", "Zobrazit", "Vložit", "Atributy", "Zjistit", "Nástroje", "Pomůcky", "Aplikace", "Okno", "Nápověda", "Cloud"];

const TitleBar = () => (
  <header className="flex h-8 items-center pl-1.5 pr-1.5">
    <Icon n="logo" cls="h-5 w-[18px]" />
    <span className="mx-1 h-3.5 w-px bg-[#a9adb1]" />
    <div className="flex items-center gap-2 pl-[7px]">
      {["newdoc", "open", "save", "printer"].map((n) => (
        <button key={n} aria-label={n}>
          <Icon n={n} />
        </button>
      ))}
      <button className="relative" aria-label="printer setup">
        <Icon n="printer" />
        <Icon n="plusred" cls="absolute left-0 top-0 size-5" />
      </button>
      {["undo", "redo", "cycle"].map((n) => (
        <button key={n} aria-label={n}>
          <Icon n={n} />
        </button>
      ))}
    </div>
    <button className="ml-2 flex flex-col items-center gap-1" aria-label="customize">
      <span className="h-px w-2.5 bg-black" />
      <Caret cls="text-black" />
    </button>
    <svg viewBox="0 0 7 14" className="ml-2.5 h-3.5 w-[7px]" aria-hidden="true">
      <path d="M7 0v14L0 7z" fill="#2a8fe0" />
    </svg>
    <nav className="flex w-[780px] justify-between pl-4 pt-0.5 text-black">
      {menus.map((m) => (
        <button key={m}>{m}</button>
      ))}
    </nav>
    <h1 className="ml-auto mr-[255px] pt-0.5 text-[#7d8083]">ZW3D 2025 SP x64 - [* PLATE.Z3PRT]</h1>
    <div className="flex items-center gap-4">
      <button aria-label="minimize">
        <svg viewBox="0 0 12 12" className="size-3">
          <path d="M1 7.500h10v3H1z" fill="#f3f4f5" stroke="#9a9da0" />
        </svg>
      </button>
      <button aria-label="restore">
        <svg viewBox="0 0 16 14" className="h-3.5 w-4">
          <path d="M5 1h10v9h-4v3H1V5h4z" fill="#f3f4f5" stroke="#8e9194" />
          <path d="M5 5h6v5M4 8h4v3H4z" fill="none" stroke="#8e9194" />
        </svg>
      </button>
      <button aria-label="close">
        <CloseIcon />
      </button>
    </div>
  </header>
);

const tabs = [
  "Plošné modelování", "Drátový model", "Přímá editace", "Plechový díl", "Svařování", "Mračno bodů", "Výměna dat", "Léčit",
  "PMI", "Nástroje", "Vizualizovat", "Zjistit", "Elektroda", "Forma", "Simulation", "Aplikace",
];

const TabBar = () => (
  <div className="flex h-7 items-end border-b border-[#b6bac3] pl-px">
    <button className="h-[26px] w-[91px] border border-[#1a4ea8] bg-[#2b60b4] text-white ring-1 ring-inset ring-[#3f78d4]">Soubor</button>
    <button className="-mb-px ml-1 h-7 w-[46px] border border-b-0 border-[#b6bac3] bg-[#fcfcfc] text-[#4a4d50]">Tvar</button>
    <nav className="ml-0.5 flex flex-1 items-end justify-between">
      {tabs.map((t, i) => (
        <button
          key={t}
          className={
            i < 2
              ? "h-[27px] border border-b-0 border-[#c4c8ce] bg-[#e6e9eb] px-2 pt-px text-[#3f4245]"
              : "h-[27px] border border-b-0 border-transparent px-2 pt-px text-[#3f4245]"
          }
        >
          {t}
        </button>
      ))}
    </nav>
    <button className="ml-1 mr-1.5 self-center" aria-label="collapse ribbon">
      <svg viewBox="0 0 14 12" className="h-3 w-3.5">
        <path d="M7 1l6 5v2H9.500v3h-5V8H1V6z" fill="#eceeef" stroke="#6e7276" />
        <path d="M4 8l3-3 3 3" fill="none" stroke="#6e7276" />
      </svg>
    </button>
    <label className="ml-1.5 flex h-[26px] w-[180px] items-center border border-[#b6bcc8] bg-white pl-0.5 pr-1.5">
      <input className="w-full min-w-0 flex-1 bg-transparent outline-none placeholder:text-[#8a8a8a]" placeholder="Najít příkaz" aria-label="Najít příkaz" />
      <Icon n="search" cls="size-3.5" />
    </label>
    <div className="ml-2 flex items-center gap-3 self-center pr-1.5">
      <button aria-label="settings">
        <Icon n="gear" />
      </button>
      <button className="flex items-center gap-2" aria-label="help">
        <span className="flex size-5 items-center justify-center rounded-full border border-[#b9c4da] bg-[#2456b8] text-sm font-bold text-white">?</span>
        <Caret />
      </button>
      <span className="flex items-center gap-2 text-black">
        <svg viewBox="0 0 11 11" className="size-[11px]">
          <path d="M1 9.500h9" stroke="currentColor" strokeWidth="3" />
        </svg>
        <svg viewBox="0 0 11 11" className="size-[11px]">
          <path d="M3.500 4V1.500h6.500V7H7.500M1 4.500h6.500V10H1z" fill="none" stroke="currentColor" strokeWidth="1.800" />
        </svg>
        <svg viewBox="0 0 11 11" className="size-[11px]">
          <path d="M1 1l9 9M10 1l-9 9" stroke="currentColor" strokeWidth="2.400" />
        </svg>
      </span>
    </div>
  </div>
);

/* ---------- ribbon ---------- */

type Item = { i: string; t: string; d?: boolean; hot?: "box" | "fill" };
type Group = { t: string; w: string; cols: { w: string; items: Item[] }[]; launch?: boolean };

const groups: Group[] = [
  {
    t: "Základní tvar",
    w: "w-[290px] pl-[9px]",
    cols: [
      { w: "w-[94px]", items: [{ i: "sketch", t: "Skica", d: true }, { i: "sphere", t: "Koule", d: true }, { i: "extrude", t: "Vysunout" }] },
      { w: "", items: [{ i: "revolve", t: "Rotovat" }, { i: "sweep", t: "Tažení", d: true }, { i: "loft", t: "Přizpůsobení profilů", d: true }] },
    ],
  },
  {
    t: "Strojírenské funkce",
    w: "w-[338px] pl-1",
    cols: [
      { w: "w-[108px]", items: [{ i: "fillet", t: "Zaoblení", d: true, hot: "box" }, { i: "chamfer", t: "Zkosit" }, { i: "draft", t: "Úkos", d: true }] },
      { w: "w-[95px]", items: [{ i: "hole", t: "Díra", d: true, hot: "box" }, { i: "rib", t: "Žebro", d: true, hot: "fill" }, { i: "thread", t: "Spirála", d: true }] },
      { w: "", items: [{ i: "trim", t: "Oříznutí hrany" }, { i: "stock", t: "Polotovar", d: true }] },
    ],
  },
  {
    t: "Upravit tvar",
    w: "w-[499px] pl-1",
    launch: true,
    cols: [
      { w: "w-[167px]", items: [{ i: "offset", t: "Odsazení povrchu", d: true }, { i: "shell", t: "Skořepina" }, { i: "thicken", t: "Zesílení" }] },
      { w: "w-[126px]", items: [{ i: "intersect", t: "Průnik tvarů", d: true }, { i: "split", t: "Rozdělit", d: true }, { i: "simplify", t: "Zjednodušit" }] },
      { w: "", items: [{ i: "replace", t: "Nahradit" }, { i: "solve", t: "Vyřešit vlastní průsečníky" }, { i: "embed", t: "Vsadit", d: true }] },
    ],
  },
  {
    t: "Morph",
    w: "w-[358px] pl-1",
    cols: [
      { w: "w-[169px]", items: [{ i: "cylbend", t: "Válcový ohyb", d: true }, { i: "morph", t: "Morfování bodem", d: true }, { i: "wrap", t: "Obalit na povrch" }] },
      { w: "", items: [{ i: "wrappat", t: "Obalit  plochy vzorem" }] },
    ],
  },
  {
    t: "Základní úpravy",
    w: "w-[270px] pl-1",
    cols: [
      { w: "w-[162px]", items: [{ i: "pattern", t: "Pole prvků", d: true }, { i: "mirror", t: "Zrcadlit vlastnost", d: true }, { i: "move", t: "Posun", d: true }] },
      { w: "", items: [{ i: "copy", t: "Kopírovat" }, { i: "scale", t: "Měřítko" }] },
    ],
  },
  { t: "Základna", w: "w-[160px] pl-1", cols: [{ w: "", items: [{ i: "datum", t: "Základní rovina", d: true }] }] },
];

const RibbonItem = ({ it }: { it: Item }) => {
  const frame = it.hot ? "border-[#f3dc92]" : "border-transparent";
  return (
    <div className="flex h-[29px]">
      <div className={"flex h-[29px] items-stretch border " + frame}>
        <button className={"flex items-center gap-1 whitespace-pre pl-[3px] " + (it.hot === "fill" ? "bg-[#fdf0cb] pr-[3px]" : it.hot ? "pr-[3px]" : "")}>
          <Icon n={it.i} />
          {it.t}
        </button>
        {it.d && (
          <button
            aria-label={it.t + " – možnosti"}
            className={
              it.hot === "box"
                ? "flex w-[17px] items-center justify-center border-l border-[#f3dc92] bg-[#fdf5dc]"
                : it.hot
                  ? "flex w-[17px] items-center justify-center border-l border-[#f3dc92] bg-white"
                  : "flex items-center pl-2"
            }
          >
            <Caret />
          </button>
        )}
      </div>
    </div>
  );
};

const Ribbon = () => (
  <section className="flex h-[119px] border-b border-[#b6bac3] bg-[#fcfcfc] pb-0.5 pt-[5px] text-[#1f2226]">
    {groups.map((g) => (
      <div key={g.t} className={"relative flex shrink-0 flex-col border-r border-[#d0d3d8] " + g.w}>
        <div className="flex h-[87px] shrink-0">
          {g.cols.map((c, i) => (
            <div key={i} className={"shrink-0 " + c.w}>
              {c.items.map((it) => (
                <RibbonItem key={it.t} it={it} />
              ))}
            </div>
          ))}
        </div>
        <div className={"text-center leading-6 text-[#6b7280] " + (g.launch ? "pr-6" : "pr-1")}>{g.t}</div>
        {g.launch && (
          <button className="absolute bottom-2 right-2" aria-label="launcher">
            <svg viewBox="0 0 10 10" className="size-2.5">
              <path d="M1 8V1h8M9 5v4H5" fill="none" stroke="#5a5f66" strokeWidth="1.400" />
              <path d="M4 4l4 4" stroke="#5a5f66" strokeWidth="1.600" />
            </svg>
          </button>
        )}
      </div>
    ))}
  </section>
);

/* ---------- selection toolbar ---------- */

const Tool = ({ n }: { n: string }) => (
  <button className="flex w-7 shrink-0 justify-center" aria-label={n}>
    <Icon n={n} />
  </button>
);

const Picker = ({ v, cls, label, off, caret = "right-2" }: { v: string; cls: string; label: string; off?: boolean; caret?: string }) => (
  <span className={"relative flex items-center border " + cls}>
    <select aria-label={label} disabled={off} className="h-full w-full appearance-none bg-transparent pl-0.5 outline-none">
      <option>{v}</option>
    </select>
    <span className={"pointer-events-none absolute " + caret}>
      <Caret cls={off ? "text-[#b5b5b5]" : "text-[#333]"} />
    </span>
  </span>
);

const Sep = () => <span className="mx-1 h-5 w-px shrink-0 bg-[#c0c4c9]" />;

const Toolbar = () => (
  <section className="flex h-[34px] items-center pt-0.5">
    <span className="ml-1 h-5 border-l-2 border-dotted border-[#8a8e96]" />
    <button className="ml-1.5 flex h-[26px] w-7 items-center justify-center border border-[#c9962c] bg-[#fce07a]" aria-label="pick">
      <Icon n="lamp" />
    </button>
    <Tool n="plus" />
    <Tool n="minus" />
    <Tool n="marquee" />
    <Caret />
    <span className="ml-2 flex"><Tool n="lasso" /></span>
    <Sep />
    <Tool n="filterbars" />
    <Picker v="Vše" label="Filtr výběru" cls="h-[26px] w-[166px] border-[#b6bcc8] bg-white text-black" />
    <button className="ml-px flex h-[26px] w-7 items-center justify-center border border-[#c9962c] bg-[#fce07a]" aria-label="part filter">
      <Icon n="partfilter" />
    </button>
    <Picker v="Pouze díl" label="Rozsah výběru" off cls="h-[26px] w-[165px] border-[#dcdfe2] bg-[#e8e9ea] text-[#8d8f92]" />
    <Tool n="chainref" />
    <Tool n="clockref" />
    <Sep />
    {["l1", "l2", "l3", "l4", "arrows", "lines", "boxes", "ballbox", "geared"].map((n) => (
      <Tool key={n} n={n} />
    ))}
    <Sep />
    {["gcursor", "gbracket", "gsquare"].map((n) => (
      <Tool key={n} n={n} />
    ))}
    <Picker v="Jeden výběr" label="Režim výběru" caret="right-1.5" cls="ml-0.5 h-[26px] w-[166px] border-[#b6bcc8] bg-white text-black" />
    {["gpick", "ggear", "gplay", "gdots", "gline", "gmid", "gcenter", "gquad", "gwavep", "gwave", "garch", "gline", "gmesh", "gmesh"].map((n, i) => (
      <Tool key={n + i} n={n} />
    ))}
  </section>
);

/* ---------- manager panel ---------- */

const stripes = "bg-[repeating-linear-gradient(180deg,#ffffff_0_23px,#f5f5f5_23px_46px)]";

const Chevron = ({ open }: { open?: boolean }) => (
  <svg viewBox="0 0 12 12" className="size-3 shrink-0" aria-hidden="true">
    <path d={open ? "M1 3.500l5 5 5-5" : "M3.500 1l5 5-5 5"} fill="none" stroke={open ? "#222" : "#888"} strokeWidth="1.600" />
  </svg>
);

const Tick = ({ label }: { label: string }) => {
  const [on, setOn] = useState(true);
  return (
    <span className="relative flex size-4">
      <input type="checkbox" aria-label={label} checked={on} onChange={() => setOn(!on)} className="size-4 appearance-none border border-black bg-white" />
      {on && (
        <svg viewBox="0 0 16 16" className="pointer-events-none absolute inset-0">
          <path d="M4 8l3 4 6-9" fill="none" stroke="#12a312" strokeWidth="2" />
        </svg>
      )}
    </span>
  );
};

const PanelHead = ({ t }: { t: string }) => (
  <div className="flex h-[26px] items-center pl-[5px] text-[#3a3d40]">
    <h2 className="pt-px">{t}</h2>
    <div className="ml-auto flex items-center gap-2.5 pr-2">
      <button aria-label="float"><FloatIcon /></button>
      <button aria-label="close panel"><CloseIcon /></button>
    </div>
  </div>
);

const Row = ({ pad, children }: { pad: string; children: ReactNode }) => (
  <tr className="odd:bg-white even:bg-[#f5f5f5]">
    <td className="h-[23px] border-b border-r border-b-[#f0f0f0] border-r-[#b6bcc8] p-0">
      <span className={"flex items-center gap-[5px] whitespace-nowrap leading-none text-[#1f2226] " + pad}>{children}</span>
    </td>
    <td />
  </tr>
);

const SideTab = ({ active, children, label }: { active?: boolean; children: ReactNode; label: string }) => (
  <button
    aria-label={label}
    className={
      active
        ? "flex h-[59px] w-full items-center justify-center border border-r-0 border-[#b6bcc8] bg-[#fcfcfc]"
        : "flex h-[59px] w-full items-center justify-center"
    }
  >
    {children}
  </button>
);

const Manager = () => (
  <aside className="flex w-[448px] shrink-0 flex-col">
    <PanelHead t="Správce" />
    <div className="flex min-h-0 flex-1 pl-0.5">
      <div className="flex w-[37px] shrink-0 flex-col">
        <SideTab active label="Strom">
          <svg viewBox="0 0 30 30" className="size-[30px]">
            <g stroke="#0a6f94" strokeWidth=".5">
              <path d="M1 5l8-4 8 3-7 4z" fill="#2fb0d6" />
              <path d="M1 5l9 3v9l-8-3z" fill="#cdeaf4" />
              <path d="M17 4l-7 4v9l7-5z" fill="#6fbfdb" />
            </g>
            <path d="M18 14h9M9 19v10M9 24h7M20 20h7v7h-7z" fill="none" stroke="#5a7a86" strokeWidth="1.400" />
          </svg>
        </SideTab>
        <SideTab label="Sestava">
          <svg viewBox="0 0 30 30" className="size-[30px]">
            <path d="M1 1h28v28H1z" fill="#e9f5fa" stroke="#5aa6c2" />
            <path d="M1 1h28v6H1z" fill="#27a9d0" />
            <path d="M15 9l9 4v9l-9 5-9-5v-9z" fill="#fbc326" stroke="#d96b0c" strokeWidth="1.300" />
            <path d="M6 13l10 3 8-3M16 16v11" stroke="#d96b0c" fill="none" />
          </svg>
        </SideTab>
        <SideTab label="Vizuály">
          <svg viewBox="0 0 30 30" className="size-[30px]">
            <path d="M0 0h30v30H0z" fill="#a9d6e6" stroke="#4b93ad" />
            <path d="M0 12q5-10 10-4t9 10q4-8 11-5v17H0z" fill="#d9eef5" stroke="#2c7c9b" />
            <path d="M0 21q10 4 17-3 6-7 13-3v15H0z" fill="#3f9fc2" />
            <circle cx="21" cy="7" r="5.500" fill="#fbb31c" stroke="#e8860c" />
            <path d="M0 19h9v-3l8 6-8 6v-4H0z" fill="#ee7a22" stroke="#b84a08" />
          </svg>
        </SideTab>
        <SideTab label="Role">
          <svg viewBox="0 0 30 30" className="size-[30px]">
            <path d="M20 4q6 0 6 7 0 4-3 7l7 5v3H15z" fill="#fbb931" stroke="#c77a0c" strokeWidth=".7" />
            <ellipse cx="13" cy="12" rx="6" ry="7" fill="url(#teal)" stroke="#0a5a78" strokeWidth=".7" />
            <path d="M0 28q2-6 10-6v-4h6v4q7 0 8 6z" fill="#1c9fc8" stroke="#0a5a78" strokeWidth=".7" />
          </svg>
        </SideTab>
      </div>
      <div className="flex flex-1 flex-col border border-[#b6bcc8] py-px pl-px pr-0.5">
        <div className="flex h-8 gap-px pb-0.5">
          <Picker v="Zobrazit vše" label="Zobrazit" caret="right-2" cls="w-[187px] border-[#b6bcc8] bg-white text-black" />
          <input aria-label="Zadejte pro hledání" placeholder="Zadejte pro hledání" className="w-[187px] border border-[#b6bcc8] bg-white pl-0.5 outline-none placeholder:text-[#8e8e8e]" />
          <button className="flex flex-1 items-center justify-center border border-[#b6bcc8] bg-white" aria-label="filter">
            <svg viewBox="0 0 20 20" className="size-5">
              <path d="M0 1h20l-7.500 9v10l-5-2v-8z" fill="#1ba6d3" stroke="#0d7ea5" strokeWidth=".6" />
            </svg>
          </button>
        </div>
        <div className={"flex min-h-0 flex-1 flex-col overflow-hidden border-r border-[#b6bcc8] bg-[position:0_29px] " + stripes}>
          <table className="w-full table-fixed border-collapse">
            <thead>
              <tr className="bg-gradient-to-b from-[#f6f8fb] to-[#eaeef4]">
                <th className="h-[29px] w-[289px] border border-l-0 border-[#9aa1b0] pl-[5px] text-left font-normal text-[#3a3d40]">Záznam vlastnosti</th>
                <th className="border border-r-0 border-[#9aa1b0]" />
              </tr>
            </thead>
            <tbody>
              <Row pad="pl-1">
                <Chevron open />
                <Icon n="tree" cls="size-[18px]" />
                PLATE
              </Row>
              <Row pad="pl-[22px]">
                <Chevron />
                <Icon n="body" cls="size-[18px]" />
                Těleso(1)
              </Row>
              <Row pad="pl-[22px]">
                <Chevron open />
                <Icon n="hist" cls="size-[18px]" />
                Historie
              </Row>
              <Row pad="pl-[58px]">
                <Tick label="Výchozí CSYS" />
                <Icon n="csys" cls="size-[18px]" />
                Výchozí CSYS
              </Row>
              <Row pad="pl-[58px]">
                <Tick label="Tvar1" />
                <Icon n="shape1" cls="size-[18px]" />
                Tvar1
              </Row>
              <Row pad="pl-[58px]">
                <Icon n="redarrow" cls="size-[18px]" />
                <span className="text-[#ee1c24]">----- MODEL Z...VIT ZDE -----</span>
              </Row>
            </tbody>
          </table>
        </div>
        <button className="flex h-[30px] items-center gap-2 border border-t-2 border-[#b6bcc8] bg-[#fcfcfc] pl-1 font-bold text-[#3a3d40]">
          <svg viewBox="0 0 8 12" className="h-3 w-2"><path d="M0 0l8 6-8 6z" fill="#555a60" /></svg>
          Přehrát
        </button>
      </div>
    </div>
  </aside>
);

/* ---------- 3D viewport ---------- */

const Head = ({ x, y, a, c, o = 1 }: { x: number; y: number; a: number; c: string; o?: number }) => (
  <path transform={`translate(${x} ${y}) rotate(${a})`} d="M0 0l-14 4.500-1-4.500 1-4.500z" fill={c} opacity={o} />
);

const Hole = ({ x, y }: { x: number; y: number }) => (
  <g transform={`translate(${x} ${y}) rotate(-29)`}>
    <ellipse rx="10" ry="23" fill="#868686" />
    <path d="M4-21A9 21 0 0 0 4 20A10 23 0 0 0 4-21z" fill="#cbcbcb" />
    <ellipse rx="10" ry="23" fill="none" />
  </g>
);

const RoundHole = ({ x, y }: { x: number; y: number }) => (
  <g transform={`translate(${x} ${y}) rotate(27)`}>
    <ellipse rx="11" ry="15" fill="#8d8d8d" />
    <path d="M4-14A11 15 0 1 0 1 15Q13 4 4-14z" fill="#999" />
    <ellipse rx="11" ry="15" fill="none" />
  </g>
);

const Model = () => (
  <svg viewBox="450 240 1053 744" className="absolute inset-0 h-full w-full" role="img" aria-label="PLATE">
    <defs>
      <linearGradient id="bendL" gradientUnits="userSpaceOnUse" x1="700" y1="632" x2="686" y2="655">
        <stop offset="0" stopColor="#9a9a9a" />
        <stop offset="1" stopColor="#767676" />
      </linearGradient>
      <linearGradient id="bendF" gradientUnits="userSpaceOnUse" x1="1000" y1="482" x2="1012" y2="502">
        <stop offset="0" stopColor="#8f8f8f" />
        <stop offset=".45" stopColor="#bcbcbc" />
        <stop offset=".7" stopColor="#8c8c8c" />
        <stop offset="1" stopColor="#7a7a7a" />
      </linearGradient>
    </defs>
    <g stroke="#111" strokeWidth="1" strokeLinejoin="round">
      {/* right flange */}
      <path d="M1148 554L1212 602Q1222 611 1233 611Q1250 610 1252 590L1251 571L1242 513L1234 508L1162 550z" fill="#757575" />
      <path d="M1242 513L1251 571Q1254 598 1245 608Q1258 602 1258 583L1257 570L1247 510z" fill="#7d7d7d" />
      <path d="M1251 571L1257 569" fill="none" />
      {/* top sheet */}
      <path d="M562 529L963 297L976 298L1240 503L1234 505L1162 548L1154 543L1079 578L971 640L907 696L833 737z" fill="#999" stroke="none" />
      <path d="M963 297Q971 293 976 298L1240 503L1233 505z" fill="#868686" stroke="none" />
      <path d="M976 298L1240 503" stroke="#777" strokeDasharray="2 1" fill="none" />
      <path d="M562 529L963 297L1233 505M963 297Q970 293 976 298" fill="none" />
      <path d="M1233 505L1161 547L1162 553L1234 511z" fill="#7d7d7d" />
      <path d="M1233 505Q1240 500 1247 508L1247 512L1242 513Q1238 509 1234 511z" fill="#8a8a8a" />
      {/* lower-left edge */}
      <path d="M833 737L907 696L908 701L835 743z" fill="#7d7d7d" />
      <path d="M907 696L896 687L902 683L908 690" fill="#777" />
      {/* left flange */}
      <path d="M829 753L840 812Q843 840 830 849Q838 840 833 813L823 755z" fill="#7b7b7b" />
      <path d="M552 549L560 607C564 650 592 690 622 713L797 846Q807 854 817 854Q832 853 834 830L833 813L823 755z" fill="#747474" />
      <path d="M833 813L840 811" fill="none" />
      <path d="M562 529Q549 538 552 549L823 755Q824 742 833 737z" fill="url(#bendL)" />
      <path d="M833 737Q824 742 823 755L829 753Q829 747 835 743z" fill="#8f8f8f" />
      <Hole x={652} y={676} />
      <Hole x={742} y={745} />
      {/* underside strips of the front flange */}
      <path d="M912 686L972 652L971 657L912 692z" fill="#868686" strokeWidth=".6" />
      <path d="M1093 581L1153 547L1153 552L1094 586z" fill="#868686" strokeWidth=".6" />
      <path d="M1153 547V552L1162 553L1161 547L1154 542z" fill="#6f6f6f" />
      {/* front flange */}
      <path d="M889 567L908 686Q911 690 914 686L893 566z" fill="#8c8c8c" />
      <path d="M893 566L1134 427L1153 547L1093 581L1092 570L971 640L972 652L912 686z" fill="#7a7a7a" />
      <path d="M1078 579L1092 570L1093 584Q1090 588 1087 585z" fill="#8e8e8e" />
      <path d="M1083 580L1087 576L1092 579" fill="none" />
      <circle cx="909" cy="689" r="3.500" fill="#808080" />
      <path d="M878 555Q880 551 884 552L1122 411Q1134 410 1134 427L893 566Q888 554 878 555z" fill="url(#bendF)" stroke="none" />
      <path d="M893 566L1134 427Q1131 409 1120 411" fill="none" />
      <path d="M878 555Q880 551 884 552Q893 556 893 566L889 567Q887 558 880 560z" fill="#858585" />
      <path d="M878 558L882 577Q886 582 889 578L887 562M882 560L886 579" fill="none" />
      <RoundHole x={1085} y={531} />
      <RoundHole x={964} y={601} />
    </g>
    {/* model csys */}
    <g fill="none">
      <path d="M898 523L855 489L847 436L889 468L946 436L954 489z" fill="#a39f94" opacity=".5" />
      <path d="M855 489L847 436L889 468L946 436L954 489" stroke="#b8700f" strokeWidth="1.300" />
      <path d="M855 489L912 457L954 489" stroke="#b99055" opacity=".6" />
      <path d="M858 488L817 460M954 489L1009 459" stroke="#b09468" opacity=".7" />
      <path d="M898 523L834 474" stroke="#c87858" strokeWidth="1.600" />
      <path d="M898 523L984 473" stroke="#8a78a8" strokeWidth="1.600" />
      <path d="M898 523L886 440" stroke="#4cb818" strokeWidth="2" />
      <path d="M898 523L882 415" stroke="#c07010" strokeWidth="1.200" />
      <Head x={882} y={415} a={-97} c="#b5650a" />
      <Head x={886} y={440} a={-97} c="#22a022" />
      <Head x={833} y={473} a={-143} c="#c07070" o={0.800} />
      <Head x={986} y={472} a={-30} c="#7878b8" o={0.900} />
      <Head x={814} y={459} a={-143} c="#a08c6c" o={0.800} />
      <Head x={1011} y={458} a={-30} c="#a08c68" />
      <text x="879" y="410" textAnchor="middle" fontSize="18" fontWeight="300" fill="#b8700f">Y</text>
    </g>
    {/* view triad */}
    <g fill="none" strokeWidth="2">
      <path d="M537 881L504 857" stroke="#f00" />
      <path d="M537 881L530 842" stroke="#2c2" />
      <path d="M537 881L580 857" stroke="#00f" />
      <Head x={495} y={851} a={-142} c="#c00000" />
      <Head x={528} y={830} a={-97} c="#158a15" />
      <Head x={590} y={851} a={-31} c="#0000d0" />
      <g textAnchor="middle" fontSize="20" fontWeight="300">
        <text x="492" y="854" fill="#f00">X</text>
        <text x="528" y="829" fill="#2c2">Y</text>
        <text x="598" y="853" fill="#00f">Z</text>
      </g>
    </g>
  </svg>
);

const VTool = ({ n, d }: { n: string; d?: boolean }) => (
  <button className="flex items-center gap-[5px]" aria-label={n}>
    <Icon n={n} />
    {d && <Caret />}
  </button>
);

const Viewport = () => (
  <main className="flex min-w-0 flex-1 flex-col pl-[2px]">
    <div className="flex h-[26px] items-end pr-2">
      <div className="-mb-px flex h-[27px] w-[172px] items-center gap-2 border border-b-0 border-[#b6bcc8] bg-[#fdfdfd] pl-[38px] text-black">
        * PLATE.Z3PRT
        <button aria-label="close document">
          <svg viewBox="0 0 12 12" className="size-3"><path d="M1 1l10 10M11 1L1 11" stroke="#7a6640" strokeWidth="2.600" /></svg>
        </button>
      </div>
      <button className="ml-2 self-center" aria-label="new document">
        <svg viewBox="0 0 12 12" className="size-3"><path d="M6 0v12M0 6h12" stroke="#a39f9f" strokeWidth="2.200" /></svg>
      </button>
      <button className="ml-auto self-center" aria-label="document list">
        <svg viewBox="0 0 12 10" className="h-2.5 w-3"><path d="M0 1h12M0 3.500h12" stroke="#9d9796" strokeWidth="1.500" /><path d="M0 5h12l-6 5z" fill="#8f8988" /></svg>
      </button>
    </div>
    <div className="relative flex flex-1 flex-col border border-[#b6bcc8] bg-gradient-to-b from-white to-[#9f9f9f]">
      <Model />
      <div className="relative flex h-7 items-center gap-2.5 pl-[173px] pt-1">
        <VTool n="vexit" />
        <VTool n="vplane" d />
        <VTool n="vpencil" />
        <VTool n="vblock" />
        <VTool n="vshade" d />
        <VTool n="vwire" d />
        <VTool n="vpoly" d />
        <VTool n="vzoom" d />
        <VTool n="vtarget" d />
        <VTool n="vfit" />
        <VTool n="vdim" d />
        <VTool n="vmon" d />
        <button aria-label="black" className="h-[11px] w-5 border border-[#444] bg-black" />
        <button aria-label="light blue" className="size-5 border border-[#201010] bg-[#bde5f5]" />
        <VTool n="vlayers" d />
        <label className="flex h-[26px] items-center gap-1.5 border border-[#b6bcc8] bg-white pl-2 pr-1.5 text-black">
          <Icon n="bulb" cls="size-4" />
          <Icon n="sun" cls="size-3.5" />
          <span className="relative flex items-center">
            <select aria-label="Hladina" className="w-[88px] appearance-none bg-transparent pl-0.5 outline-none">
              <option>Hladina000</option>
            </select>
            <span className="pointer-events-none absolute right-0"><Caret /></span>
          </span>
        </label>
      </div>
      <p className="relative -mt-[3px] pl-[19px] leading-[26px] text-black">
        Podržet &lt;F2&gt; pro dynamické prohlížení.
        <br />
        &lt;F8&gt; nebo &lt;Shift-roll&gt; pro nalezení dalšího platného nastavení filtru.
      </p>
      <p className="relative mt-auto pl-[3px] text-[19px] leading-[22px] text-black">48.787mm</p>
    </div>
  </main>
);

/* ---------- file browser ---------- */

const Arrow = ({ a }: { a: string }) => (
  <svg viewBox="0 0 20 20" className={"size-5 " + a} aria-hidden="true">
    <path d="M0 10l9-7v4h11v6H9v4z" fill="#b3b3b3" stroke="#9c9c9c" strokeWidth=".7" />
  </svg>
);

const Section = ({ t, open }: { t: string; open?: boolean }) => (
  <button className="flex h-[30px] w-full items-center gap-2 border border-[#b6bcc8] bg-[#fcfcfc] pl-1 font-bold text-[#2f3134]">
    <svg viewBox="0 0 12 12" className="size-3">
      <path d={open ? "M0 1h12l-6 11z" : "M1 0l9 6-9 6z"} fill="#555a60" />
    </svg>
    {t}
  </button>
);

const Files = () => (
  <aside className="flex w-[412px] shrink-0 flex-col">
    <PanelHead t="Prohlížeč souborů" />
    <div className="flex min-h-0 flex-1">
      <div className="flex min-w-0 flex-1 flex-col border border-[#b6bcc8] p-px">
        <div className="flex gap-1 pb-[3px]">
          {["", "rotate-180", "rotate-90"].map((a) => (
            <button key={a} disabled aria-label={"nav " + a} className="flex h-[31px] w-[35px] items-center justify-center border border-[#d0d3d7] bg-[#ececec]">
              <Arrow a={a} />
            </button>
          ))}
          <button aria-label="refresh" className="flex h-[31px] w-[35px] items-center justify-center border border-[#b6bcc8] bg-[#fcfcfc]">
            <Icon n="swap" />
          </button>
        </div>
        <ul className={"h-[222px] border border-[#b6bcc8] text-[#1f2226] " + stripes}>
          {[["star", "Oblíbené"], ["folder", "(C:)"]].map(([n, t]) => (
            <li key={t} className="flex h-[23px] items-center gap-1 pl-1">
              <Chevron />
              <Icon n={n} cls="ml-1 size-[18px]" />
              {t}
            </li>
          ))}
        </ul>
        <div className="mt-2 bg-[#dce0e8]">
          <Section t="Hledat" open />
          <div className="flex h-[37px] items-center gap-[3px] border border-t-0 border-[#b6bcc8] px-[2px]">
            <span className="relative flex h-[31px] flex-1 items-center border border-[#b6bcc8] bg-white">
              <input aria-label="Hledat" placeholder="Hledat..." className="w-full min-w-0 bg-transparent pl-1 outline-none placeholder:text-[#8e8e8e]" />
              <span className="absolute right-1.5"><Caret /></span>
            </span>
            <button aria-label="search" className="flex h-[31px] w-[47px] items-center justify-center border border-[#b6bcc8] bg-[#fcfcfc]"><Icon n="search" /></button>
            <button aria-label="settings" className="flex h-[31px] w-[47px] items-center justify-center border border-[#b6bcc8] bg-[#fcfcfc]"><Icon n="pliers" /></button>
          </div>
        </div>
        <div className="mt-0.5 flex min-h-0 flex-1 flex-col bg-[#dce0e8]">
          <Section t="Seznam souborů" open />
          <div className="flex h-[38px] items-center gap-[3px] px-[3px]">
            <div className="flex h-[31px] w-[50px] border border-[#b6bcc8]">
              <button aria-label="view" className="flex flex-1 items-center justify-center bg-[#fcfcfc]"><Icon n="grid" /></button>
              <button aria-label="view options" className="flex w-2.5 items-center justify-center"><Caret cls="text-black" /></button>
            </div>
            <Picker v="All Support Files" label="Typ souborů" caret="right-1.5" cls="h-8 flex-1 border-[#b6bcc8] bg-white text-black" />
          </div>
          <div className="flex-1 border border-[#b6bcc8] bg-white" />
          <div className="flex h-[37px] items-center border border-t-0 border-[#b6bcc8] pl-0.5 pr-[2px] text-black">
            <label htmlFor="objs" className="w-[109px] whitespace-nowrap">Seznam objektů</label>
            <span className="relative flex h-8 flex-1 items-center border border-[#b6bcc8] bg-white">
              <select id="objs" className="h-full w-full appearance-none outline-none" />
              <span className="pointer-events-none absolute right-1.5"><Caret /></span>
            </span>
          </div>
        </div>
        <div className="mt-0.5"><Section t="Náhled" /></div>
      </div>
      <div className="flex w-9 shrink-0 flex-col">
        <SideTab active label="Soubory">
          <Icon n="folder" cls="size-[29px]" />
        </SideTab>
        <SideTab label="Knihovna">
          <svg viewBox="0 0 30 30" className="size-[30px]">
            <path d="M1 4h28v23H1z" fill="url(#gold)" stroke="#b9541a" />
            <path d="M2 4V1h8v3z" fill="#e08a4a" stroke="#b9541a" />
            <path d="M8 25L24 7" stroke="#0d5f82" strokeWidth="6" />
            <circle cx="24" cy="7" r="3.500" fill="#2a9cc8" />
            <circle cx="6" cy="26" r="3.500" fill="#2a9cc8" />
            <ellipse cx="17" cy="14" rx="5" ry="4" fill="none" stroke="#e4f4fa" strokeWidth="1.500" />
          </svg>
        </SideTab>
        <SideTab label="Vrstvy">
          <Icon n="vlayers" cls="size-[30px]" />
        </SideTab>
        <SideTab label="Vzhled">
          <svg viewBox="0 0 30 30" className="size-[30px]">
            <g transform="scale(1.500)"><Folder /></g>
            <circle cx="21" cy="19" r="8.500" fill="#2aa5cf" stroke="#444" strokeWidth=".6" />
            <path d="M12.500 19q8-3 17 0a8.500 8.500 0 0 1-17 0z" fill="#f08a1c" />
            <path d="M14 14q3-4 7-3.500-2 3-2.500 7.500l-5.500.5q0-2 1-4.500z" fill="#f2f5f0" />
            <path d="M12.500 19l5.500-1 1 9q-6-2-6.500-8z" fill="#c8402c" />
          </svg>
        </SideTab>
        <SideTab label="Barvy">
          <svg viewBox="0 0 30 30" className="size-[30px]">
            <path d="M1 10q1-5 8-4l3-4q6 1 7 5l-1 5q-6 5-14 3-4-2-3-5z" fill="url(#teal)" stroke="#0a4f6b" strokeWidth=".5" />
            <ellipse cx="8" cy="10" rx="3.500" ry="2" fill="#d5eef6" />
            <path d="M9 18h6v8H9z" fill="#e02b20" />
            <path d="M15 18h6v8h-6z" fill="#5ab031" />
            <path d="M21 18h6v8h-6z" fill="#2c4aa8" />
          </svg>
        </SideTab>
      </div>
    </div>
  </aside>
);

/* ---------- status bar ---------- */

const Status = () => (
  <footer className="flex h-[33px] items-center pl-[5px] pt-px text-[#3a3d40]">
    <span className="pt-px">Vybrat příkaz nebo entitu.</span>
    <span className="ml-auto h-7 w-px bg-[#7d8084]" />
    <button aria-label="panels" className="ml-4 flex h-6 w-[25px] items-center justify-center border border-[#c9962c] bg-[#fce07a]"><Icon n="tb1" cls="size-[18px]" /></button>
    <button aria-label="display" className="ml-2.5 flex h-6 w-[25px] items-center justify-center border border-[#c9962c] bg-[#fce07a]"><Icon n="tb2" cls="size-[18px]" /></button>
    <button aria-label="output" className="ml-3 flex"><Icon n="tb3" cls="size-[18px]" /></button>
    <input aria-label="Příkaz" className="ml-3.5 h-7 w-[437px] border border-r-0 border-[#b6bcc8] bg-white outline-none" />
  </footer>
);

export default function App() {
  return (
    <div className="flex h-screen min-h-[700px] flex-col overflow-hidden bg-[#e1e5e8] font-['Noto_Sans','Open_Sans',sans-serif] text-sm leading-5">
      <Defs />
      <TitleBar />
      <TabBar />
      <Ribbon />
      <Toolbar />
      <div className="flex min-h-0 flex-1">
        <Manager />
        <Viewport />
        <Files />
      </div>
      <Status />
    </div>
  );
}
